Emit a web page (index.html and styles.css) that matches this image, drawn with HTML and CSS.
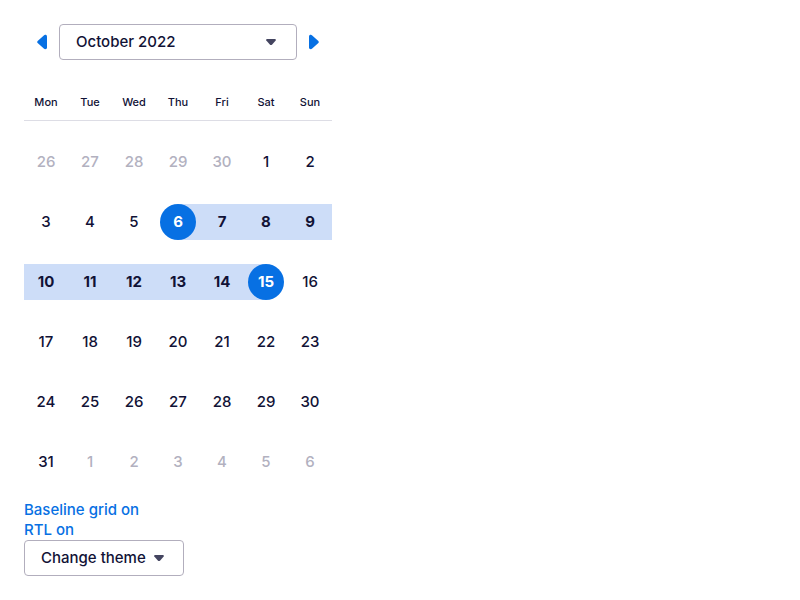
FILE: index.html
```html
<!DOCTYPE html>
<html lang="en">
<head>
<meta charset="utf-8">
<meta name="viewport" content="width=device-width, initial-scale=1">
<title>Calendar</title>
<link rel="stylesheet" href="styles.css">
</head>
<body>
<main class="page">
  <section class="calendar" aria-label="Calendar">
    <div class="calendar-nav">
      <button class="nav-button" type="button" aria-label="Previous month">
        <svg width="24" height="24" viewBox="0 0 24 24" aria-hidden="true"><path d="M7.6 11.1 13.8 5.4C15.2 4.3 17 5 17 6.600V17.400C17 19 15.200 19.700 13.800 18.600L7.600 12.900Q6.700 12 7.600 11.100Z"/></svg>
      </button>
      <div class="month-field">
        <select class="month-select" aria-label="Change month">
          <option>September 2022</option>
          <option selected>October 2022</option>
          <option>November 2022</option>
        </select>
        <svg class="month-caret" width="16" height="16" viewBox="0 0 16 16" aria-hidden="true"><path d="M4 5h8q1.400.4.700 1.600L9.200 10.400Q8 11.500 6.800 10.400L3.300 6.600Q2.600 5.400 4 5Z"/></svg>
      </div>
      <button class="nav-button" type="button" aria-label="Next month">
        <svg width="24" height="24" viewBox="0 0 24 24" aria-hidden="true"><path d="M15.400 11.100 9.200 5.400C7.800 4.300 6 5 6 6.600V17.400C6 19 7.800 19.700 9.200 18.600L15.400 12.900Q16.300 12 15.400 11.100Z"/></svg>
      </button>
    </div>
    <table class="month">
      <thead>
        <tr><th scope="col">Mon</th><th scope="col">Tue</th><th scope="col">Wed</th><th scope="col">Thu</th><th scope="col">Fri</th><th scope="col">Sat</th><th scope="col">Sun</th></tr>
      </thead>
      <tbody>
        <tr>
          <td><button class="day" disabled>26</button></td>
          <td><button class="day" disabled>27</button></td>
          <td><button class="day" disabled>28</button></td>
          <td><button class="day" disabled>29</button></td>
          <td><button class="day" disabled>30</button></td>
          <td><button class="day">1</button></td>
          <td><button class="day">2</button></td>
        </tr>
        <tr>
          <td><button class="day">3</button></td>
          <td><button class="day">4</button></td>
          <td><button class="day">5</button></td>
          <td><div class="band band-start"><button class="day selected">6</button></div></td>
          <td><div class="band"><button class="day">7</button></div></td>
          <td><div class="band"><button class="day">8</button></div></td>
          <td><div class="band"><button class="day">9</button></div></td>
        </tr>
        <tr>
          <td><div class="band"><button class="day">10</button></div></td>
          <td><div class="band"><button class="day">11</button></div></td>
          <td><div class="band"><button class="day">12</button></div></td>
          <td><div class="band"><button class="day">13</button></div></td>
          <td><div class="band"><button class="day">14</button></div></td>
          <td><div class="band band-end"><button class="day selected">15</button></div></td>
          <td><button class="day">16</button></td>
        </tr>
        <tr>
          <td><button class="day">17</button></td>
          <td><button class="day">18</button></td>
          <td><button class="day">19</button></td>
          <td><button class="day">20</button></td>
          <td><button class="day">21</button></td>
          <td><button class="day">22</button></td>
          <td><button class="day">23</button></td>
        </tr>
        <tr>
          <td><button class="day">24</button></td>
          <td><button class="day">25</button></td>
          <td><button class="day">26</button></td>
          <td><button class="day">27</button></td>
          <td><button class="day">28</button></td>
          <td><button class="day">29</button></td>
          <td><button class="day">30</button></td>
        </tr>
        <tr>
          <td><button class="day">31</button></td>
          <td><button class="day" disabled>1</button></td>
          <td><button class="day" disabled>2</button></td>
          <td><button class="day" disabled>3</button></td>
          <td><button class="day" disabled>4</button></td>
          <td><button class="day" disabled>5</button></td>
          <td><button class="day" disabled>6</button></td>
        </tr>
      </tbody>
    </table>
  </section>
  <div class="tools">
    <a class="tool-link" href="#baseline">Baseline grid on</a>
    <a class="tool-link" href="#rtl">RTL on</a>
    <button class="theme-button" type="button">Change theme
      <svg width="16" height="16" viewBox="0 0 16 16" aria-hidden="true"><path d="M4 5h8q1.400.4.700 1.600L9.200 10.400Q8 11.500 6.800 10.400L3.300 6.600Q2.600 5.400 4 5Z"/></svg>
    </button>
  </div>
</main>
</body>
</html>
```
FILE: styles.css
```css
:root {
  --ink: #111236;
  --muted: #b2b1bf;
  --line: #b2aebd;
  --blue: #0770e3;
  --band: #cdddf8;
}

* { box-sizing: border-box; }

body {
  margin: 0;
  background: #fff;
  color: var(--ink);
  font: 450 15px/20px Inter, "Liberation Sans", sans-serif;
}

button, select {
  font: inherit;
  color: inherit;
}

.page { padding: 24px; }

.calendar { max-width: 308px; }

.calendar-nav {
  display: flex;
  align-items: center;
}

.nav-button {
  flex: none;
  display: flex;
  align-items: center;
  justify-content: center;
  width: 35px;
  height: 36px;
  padding: 0;
  border: 0;
  background: none;
  fill: var(--blue);
}

.month-field {
  position: relative;
  flex: 1;
}

.month-select {
  display: block;
  appearance: none;
  width: 100%;
  height: 36px;
  padding: 0 40px 0 16px;
  border: 1px solid var(--line);
  border-radius: 4px;
  background: #fff;
}

.month-caret {
  position: absolute;
  top: 10px;
  right: 18px;
  fill: #444560;
  pointer-events: none;
}

.month {
  width: 100%;
  margin-top: 24px;
  table-layout: fixed;
  border-collapse: separate;
  border-spacing: 0;
}

.month th {
  height: 36px;
  padding: 0;
  font-size: 11px;
  font-weight: 450;
}

.month td {
  padding: 24px 0 0;
  text-align: center;
}

.month tbody tr:first-child td {
  padding-top: 23px;
  border-top: 1px solid #dddde5;
}

.band { background: var(--band); }
.band-start { background: linear-gradient(to right, transparent 50%, var(--band) 50%); }
.band-end { background: linear-gradient(to left, transparent 50%, var(--band) 50%); }

.day {
  display: block;
  width: 36px;
  height: 36px;
  margin: 0 auto;
  padding: 0;
  border: 0;
  border-radius: 50%;
  background: none;
}

.day:disabled { color: var(--muted); }

.band .day { font-weight: 700; }

.day.selected {
  background: var(--blue);
  color: #fff;
}

.tools {
  display: flex;
  flex-direction: column;
  align-items: flex-start;
  margin-top: 20px;
}

.tool-link {
  color: var(--blue);
  text-decoration: none;
}

.theme-button {
  display: flex;
  align-items: center;
  gap: 5px;
  height: 36px;
  padding: 0 16px;
  border: 1px solid var(--line);
  border-radius: 4px;
  background: #fff;
}

.theme-button svg { fill: #444560; }
```
